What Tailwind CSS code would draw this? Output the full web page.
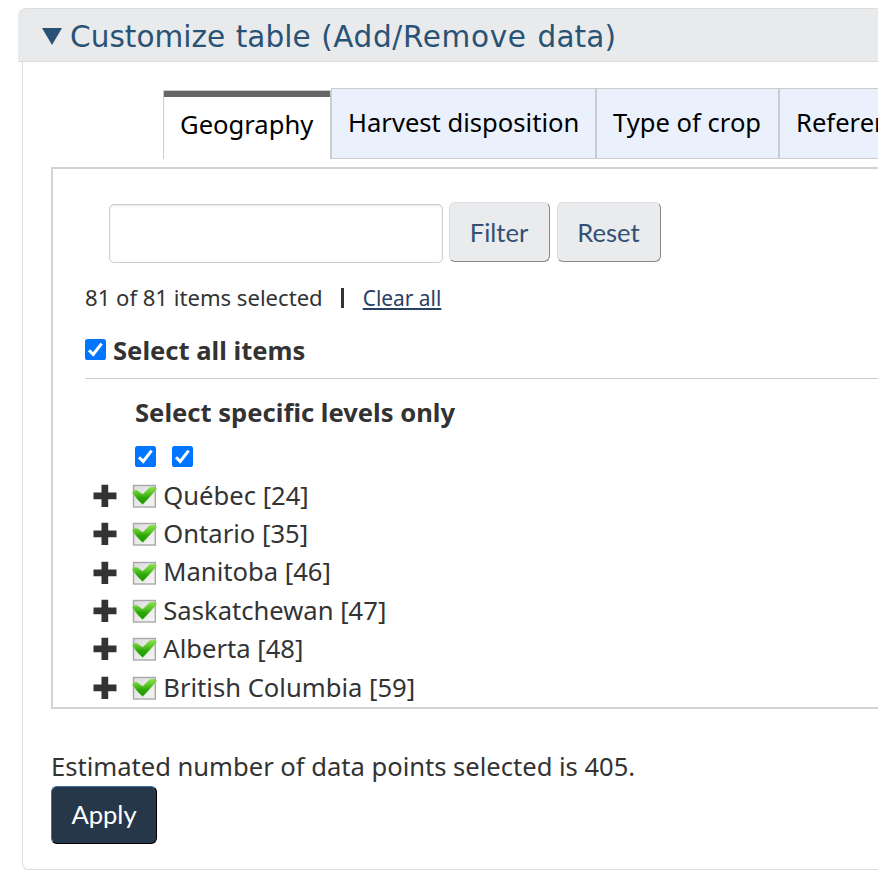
<!DOCTYPE html>
<html lang="en">
<head>
<meta charset="utf-8">
<title>Customize table</title>
<script src="https://cdn.jsdelivr.net/npm/@tailwindcss/browser@4"></script>
</head>
<body class="h-[878px] w-[878px] overflow-hidden bg-white pt-2 font-['Noto_Sans',sans-serif] text-[25.6px] leading-[38px] whitespace-nowrap text-[#333]">
<svg width="0" height="0" class="absolute" aria-hidden="true">
  <defs>
    <linearGradient id="box" x1="0" y1="0" x2="1" y2="1"><stop offset="0" stop-color="#dcdcdc"/><stop offset="1" stop-color="#f6f6f6"/></linearGradient>
    <linearGradient id="green" x1="0" y1="0" x2="0" y2="1"><stop offset="0" stop-color="#8fe04a"/><stop offset=".35" stop-color="#5bc62a"/><stop offset=".6" stop-color="#2ea808"/><stop offset="1" stop-color="#1f9400"/></linearGradient>
    <symbol id="plus" viewBox="0 0 24 24"><path d="M8.500 .8h6.700v7.700H23.500v6.700h-8.300v7.800h-6.700v-7.800H.5v-6.700h8z" fill="#333"/></symbol>
    <symbol id="tick" viewBox="0 0 25 24"><rect x="1.500" y="1.500" width="21.800" height="21.500" fill="url(#box)" stroke="#a8a8a8" stroke-width="1.400"/><path d="M.5 8.500C2 6.200 3.800 5.600 5.500 6.800L10.800 10.200 17.500 3.800C20.500 2.400 23.500 2.800 24.700 5 20.500 10 16 15 10.700 20.500 7 17.500 3.500 13.500 .5 8.500z" fill="url(#green)" stroke="#7fd455" stroke-width=".5"/></symbol>
    <symbol id="check" viewBox="0 0 21 21"><rect width="21" height="21" rx="2.600" fill="#0075ff"/><path d="M4 11.200 8.200 15.400 16.600 4.600" fill="none" stroke="#fff" stroke-width="3"/></symbol>
  </defs>
</svg>
<section class="w-[860px] ml-[18px]">
  <h2 class="flex h-[54px] items-center rounded-tl-lg border-y border-[#ddd] bg-[#e8eaec] pt-1 pl-6 font-['DejaVu_Sans',sans-serif] text-[29.500px] text-[#295376]">
    <svg class="mr-2 mb-[1px] h-[17px] w-5" viewBox="0 0 20 17"><path d="M0 0h20L10 17z" fill="#295376"/></svg>
    <span><span class="tracking-[0.050px] [word-spacing:1px]">Customize table </span><span class="tracking-[0.650px] [word-spacing:1px]">(Add/Remove </span><span class="tracking-[0.100px]">data)</span></span>
  </h2>
  <div class="ml-1 h-[808px] rounded-bl-md border-b border-l border-[#ddd] pt-[26px] pl-7">
    <div class="flex h-[71px] items-end overflow-hidden pl-28 text-black">
      <div class="h-[69px] w-[168px] shrink-0 border-x border-t border-[#ccc]"><div class="h-[68px] border-t-[6px] border-[#666] pt-[9px] pl-4">Geography</div></div>
      <div class="h-[71px] w-[265px] shrink-0 border border-[#ccc] bg-[#eaf1fc] pt-[15px] pl-4">Harvest disposition</div>
      <div class="h-[71px] w-[183px] shrink-0 border border-[#ccc] bg-[#eaf1fc] pt-[15px] pl-4">Type of crop</div>
      <div class="h-[71px] w-[240px] shrink-0 border border-[#ccc] bg-[#eaf1fc] pt-[15px] pl-4">Reference period</div>
    </div>
    <div class="mt-2 h-[542px] overflow-hidden border-2 border-r-0 border-[#d3d3d3] pt-[33px] pl-8">
      <div class="flex items-start pl-6 font-['Lato',sans-serif] text-[#335075]">
        <input type="text" aria-label="Filter items" class="mt-[2px] h-[59px] w-[334px] rounded-[5px] border border-[#ccc] shadow-[inset_0_1px_2px_#00000018]">
        <button class="ml-[6px] h-[60px] w-[101px] rounded-md border border-t-[#dcdee1] border-r-[#888] border-b-[#888] border-l-[#dcdee1] bg-[#eaebed] pr-[1px]">Filter</button>
        <button class="ml-[7px] h-[60px] w-[104px] rounded-md border border-t-[#dcdee1] border-r-[#888] border-b-[#888] border-l-[#dcdee1] bg-[#eaebed] pr-[1px]">Reset</button>
      </div>
      <div class="mt-[15px] flex h-[38px] items-center text-[22.100px]"><span>81 of 81 items selected</span><span class="mt-px ml-[18px] h-5 w-[3px] bg-[#333]"></span><a class="mt-[2px] ml-[19px] text-[20.900px] text-[#284162] underline decoration-2 underline-offset-[2px]">Clear all</a></div>
      <div class="mt-4 flex h-[47px] items-start border-b border-[#ccc] font-bold"><svg class="mt-[7px] mr-[7px] size-[21px]"><use href="#check"/></svg>Select all items</div>
      <div class="mt-[15px] pl-[50px] font-bold">Select specific levels only</div>
      <div class="mt-[14px] flex gap-4 pl-[50px]"><svg class="size-[21px]"><use href="#check"/></svg><svg class="size-[21px]"><use href="#check"/></svg></div>
      <ul class="mt-[9.700px] pl-2 leading-[38.400px]">
        <li class="flex h-[38.400px] items-center"><svg class="mr-[15px] size-6"><use href="#plus"/></svg><svg class="mr-[6.300px] h-6 w-[25px]"><use href="#tick"/></svg>Québec [24]</li>
        <li class="flex h-[38.400px] items-center"><svg class="mr-[15px] size-6"><use href="#plus"/></svg><svg class="mr-[6.300px] h-6 w-[25px]"><use href="#tick"/></svg>Ontario [35]</li>
        <li class="flex h-[38.400px] items-center"><svg class="mr-[15px] size-6"><use href="#plus"/></svg><svg class="mr-[6.300px] h-6 w-[25px]"><use href="#tick"/></svg>Manitoba [46]</li>
        <li class="flex h-[38.400px] items-center"><svg class="mr-[15px] size-6"><use href="#plus"/></svg><svg class="mr-[6.300px] h-6 w-[25px]"><use href="#tick"/></svg>Saskatchewan [47]</li>
        <li class="flex h-[38.400px] items-center"><svg class="mr-[15px] size-6"><use href="#plus"/></svg><svg class="mr-[6.300px] h-6 w-[25px]"><use href="#tick"/></svg>Alberta [48]</li>
        <li class="flex h-[38.400px] items-center"><svg class="mr-[15px] size-6"><use href="#plus"/></svg><svg class="mr-[6.300px] h-6 w-[25px]"><use href="#tick"/></svg>British Columbia [59]</li>
      </ul>
    </div>
    <p class="mt-[39px] tracking-[-0.020px]">Estimated number of data points selected is 405.</p>
    <button class="block h-[58px] w-[106px] rounded-md border border-t-[#3f6d9c] border-r-black border-b-black border-l-[#3f6d9c] bg-[#26374a] pb-[2px] font-['Lato',sans-serif] text-white">Apply</button>
  </div>
</section>
</body>
</html>
